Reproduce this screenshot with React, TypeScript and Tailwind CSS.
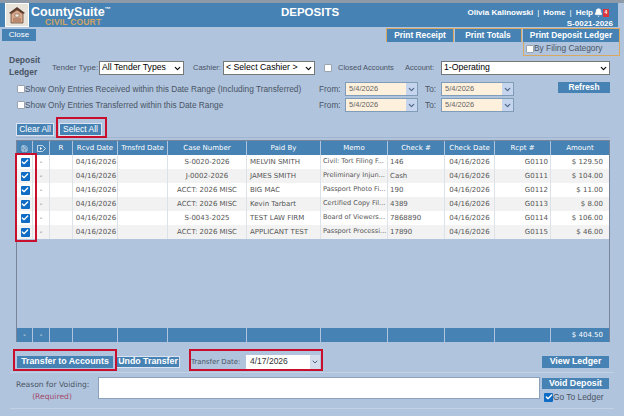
import { Bell, Check, ChevronDown, Save } from 'lucide-react'

const cols = 'grid grid-cols-[16px_17px_23px_45px_50px_79px_74px_67px_57px_50px_56px_58px]'

const rows = [
  { caseNo: 'S-0020-2026', paidBy: 'MELVIN SMITH', memo: 'Civil: Tort Filing F...', check: '146', rcpt: 'G0110', amount: '$ 129.50' },
  { caseNo: 'J-0002-2026', paidBy: 'JAMES SMITH', memo: 'Preliminary Injun...', check: 'Cash', rcpt: 'G0111', amount: '$ 104.00' },
  { caseNo: 'ACCT: 2026 MISC', paidBy: 'BIG MAC', memo: 'Passport Photo Fi...', check: '190', rcpt: 'G0112', amount: '$ 11.00' },
  { caseNo: 'ACCT: 2026 MISC', paidBy: 'Kevin Tarbart', memo: 'Certified Copy Fil...', check: '4389', rcpt: 'G0113', amount: '$ 8.00' },
  { caseNo: 'S-0043-2025', paidBy: 'TEST LAW FIRM', memo: 'Board of Viewers...', check: '7868890', rcpt: 'G0114', amount: '$ 106.00' },
  { caseNo: 'ACCT: 2026 MISC', paidBy: 'APPLICANT TEST', memo: 'Passport Processi...', check: '17890', rcpt: 'G0115', amount: '$ 46.00' },
]

const headers = ['Rcvd Date', 'Trnsfrd Date', 'Case Number', 'Paid By', 'Memo', 'Check #', 'Check Date', 'Rcpt #', 'Amount']

function Box({ className = '' }: { className?: string }) {
  return <span className={`inline-block w-[8px] h-[8px] bg-white border border-[#9aa4b2] rounded-[1px] shrink-0 ${className}`} />
}

function Tick({ className = '' }: { className?: string }) {
  return (
    <span className={`flex items-center justify-center w-[9px] h-[9px] bg-[#0f6cc4] rounded-[1px] shrink-0 ${className}`}>
      <Check size={8} strokeWidth={4} className="text-white" />
    </span>
  )
}

function DateBox({ value }: { value: string }) {
  return (
    <div className="flex items-center w-[73px] h-[14px] bg-[#fdf0dc] border border-[#7f9db9] pl-[3px]">
      <span className="flex-1 text-[7.5px] text-[#666]">{value}</span>
      <span className="flex items-center justify-center w-[11px] h-full bg-[#c5d5ee]">
        <ChevronDown size={9} strokeWidth={3} className="text-[#4d6185]" />
      </span>
    </div>
  )
}

function Select({ value, className = '' }: { value: string; className?: string }) {
  return (
    <div className={`flex items-center h-[14px] bg-white border border-[#767676] pl-[2px] pr-[1px] text-[8.7px] text-black ${className}`}>
      <span className="flex-1 whitespace-nowrap overflow-hidden">{value}</span>
      <ChevronDown size={9} strokeWidth={3} className="text-black" />
    </div>
  )
}

function Btn({ label, className = '' }: { label: string; className?: string }) {
  return (
    <div className={`flex items-center justify-center bg-[#4682b4] text-white font-bold whitespace-nowrap ${className}`}>
      {label}
    </div>
  )
}

function Logo() {
  return (
    <div className="w-[24px] h-[24px] bg-[#e8e4dc] border border-white flex items-center justify-center">
      <svg width="20" height="20" viewBox="0 0 20 20">
        <path d="M2 8 L10 2 L18 8 L16 9 L10 5 L4 9 Z" fill="#5b3a2a" />
        <path d="M4 9 L10 5 L16 9 V18 H4 Z" fill="#d9a98c" stroke="#6b4a3a" strokeWidth="0.8" />
        <rect x="8" y="9" width="4" height="3" fill="#f3efe6" stroke="#6b4a3a" strokeWidth="0.5" />
        <path d="M6 14 H14 M6 16 H14" stroke="#8a5a44" strokeWidth="0.8" />
      </svg>
    </div>
  )
}

export default function App() {
  return (
    <div className="relative w-[624px] h-[416px] overflow-hidden bg-[#b0c4de] font-['Liberation_Sans',Arial,sans-serif] text-[#4a5564]">
      <div className="h-[3px] bg-[#8f9aa8]" />

      {/* header */}
      <div className="flex h-[24px] w-[618px] bg-[#4682b4] text-white">
        <div className="pl-[5px]"><Logo /></div>
        <div className="ml-[2px] w-[160px] leading-none">
          <div className="flex items-start h-[12px] mt-[3px] text-[12.5px] font-bold whitespace-nowrap">
            CountySuite<span className="text-[6px] font-bold">™</span>
          </div>
          <div className="text-[8.5px] font-bold text-[#d0a566] ml-[14px] tracking-[0.2px]">CIVIL COURT</div>
        </div>
        <div className="w-[238px] mt-[4px] text-[11.5px] font-bold text-center leading-none">DEPOSITS</div>
        <div className="flex-1 pr-[5px] text-right leading-none font-bold text-[8px]">
          <div className="flex justify-end items-center gap-[4px] mt-[3px] h-[13px] pr-[4px]">
            <span className="whitespace-nowrap">Olivia Kalinowski</span>
            <span className="font-normal">|</span>
            <span>Home</span>
            <span className="font-normal">|</span>
            <span>Help</span>
            <span className="flex items-center -ml-[3px]">
              <Bell size={9} fill="white" />
              <span className="w-[6px] h-[8px] bg-[#d9363e] text-[5px] flex items-center justify-center">4</span>
            </span>
          </div>
          <div className="mt-[1px]">S-0021-2026</div>
        </div>
      </div>

      {/* close and print */}
      <div className="flex justify-between h-[29px] pt-[1px]">
        <Btn label="Close" className="w-[34px] h-[12px] ml-[2px] mt-[1px] font-normal text-[8px]" />
        <div className="flex flex-col w-[234px] mr-[4px]">
          <div className="flex h-[14px] gap-[1px] border-t border-[#d9a860] text-[8.4px]">
            <Btn label="Print Receipt" className="w-[68px] border-x border-[#d9a860]" />
            <Btn label="Print Totals" className="w-[67px] border-r border-[#d9a860]" />
            <Btn label="Print Deposit Ledger" className="flex-1 border-r border-[#d9a860]" />
          </div>
          <div className="flex items-center self-end w-[97px] h-[14px] pl-[2px] border-x border-b border-[#d9a860] text-[8.4px]">
            <Box />
            <span className="whitespace-nowrap">By Filing Category</span>
          </div>
        </div>
      </div>

      {/* filters */}
      <div className="flex h-[25px] text-[7.5px]">
        <div className="w-[43px] pl-[9px] -mt-[2px] text-[8.5px] font-bold leading-[12px]">Deposit<br />Ledger</div>
        <div className="flex items-center ml-[9px] h-[14px] mt-[5px] whitespace-nowrap">
          <span className="w-[47px] text-[8px]">Tender Type:</span>
          <Select value="All Tender Types" className="w-[85px]" />
          <span className="ml-[9px] w-[30px]">Cashier:</span>
          <Select value="< Select Cashier >" className="w-[92px] text-[8.2px]" />
          <Box className="ml-[9px]" />
          <span className="ml-[6px] w-[67px]">Closed Accounts</span>
          <span className="w-[36px]">Account:</span>
          <Select value="1-Operating" className="w-[169px]" />
        </div>
      </div>

      <div className="flex h-[16px] pl-[17px] items-center text-[8.3px] whitespace-nowrap">
        <Box />
        <span className="w-[294px]">Show Only Entries Received within this Date Range (Including Transferred)</span>
        <span className="w-[26px]">From:</span>
        <DateBox value="5/4/2026" />
        <span className="ml-[7px] w-[16px]">To:</span>
        <DateBox value="5/4/2026" />
        <Btn label="Refresh" className="ml-[44px] w-[52px] h-[11px] -mt-[4px] text-[8.4px]" />
      </div>
      <div className="flex h-[16px] pl-[17px] items-center text-[8.3px] whitespace-nowrap">
        <Box />
        <span className="w-[294px]">Show Only Entries Transferred within this Date Range</span>
        <span className="w-[26px]">From:</span>
        <DateBox value="5/4/2026" />
        <span className="ml-[7px] w-[16px]">To:</span>
        <DateBox value="5/4/2026" />
      </div>

      <div className="flex gap-[5px] ml-[16px] w-[594px] mt-[10px] h-[15px] mb-[2px] border-b border-[#a2b4cc] text-[8.5px]">
        <Btn label="Clear All" className="w-[38px] h-[13px] font-normal border border-[#dbe4f0]" />
        <Btn label="Select All" className="w-[43px] h-[13px] font-normal border border-[#dbe4f0]" />
      </div>

      {/* table */}
      <div className="flex flex-col w-[594px] h-[202px] ml-[16px] border-l border-r border-t border-[#77849a] font-['DejaVu_Sans',sans-serif] text-[7px]">
        <div className={`${cols} h-[14px] bg-[#4682b4] text-white`}>
          <div className="flex items-center justify-center border-r border-[#b0c4de]"><Save size={7} /></div>
          <div className="flex items-center justify-center border-r border-[#b0c4de]">
            <svg width="9" height="7" viewBox="0 0 9 7" fill="none" stroke="white" strokeWidth="0.7">
              <path d="M0.5 0.5 H5.5 L8.5 3.5 L5.5 6.5 H0.5 Z" />
              <path d="M3 2 L5 3.5 L3 5 Z" fill="white" stroke="none" />
            </svg>
          </div>
          <div className="flex items-center justify-center border-r border-[#b0c4de]">R</div>
          {headers.map(h => (
            <div key={h} className="flex items-center justify-center border-r border-[#b0c4de] whitespace-nowrap last:border-r-0">{h}</div>
          ))}
        </div>
        {rows.map((r, i) => (
          <div key={r.rcpt} className={`${cols} h-[14px] items-stretch text-[#555] ${i % 2 ? 'bg-[#f2f2f2]' : 'bg-white'}`}>
            <div className="flex items-center justify-center pl-[1px] border-r border-[#dde2e8]"><Tick /></div>
            <div className="flex items-center justify-center border-r border-[#dde2e8]">-</div>
            <div className="border-r border-[#dde2e8]" />
            <div className="flex items-center justify-center pl-[2px] border-r border-[#dde2e8]">04/16/2026</div>
            <div className="border-r border-[#dde2e8]" />
            <div className="flex items-center justify-center border-r border-[#dde2e8] whitespace-nowrap">{r.caseNo}</div>
            <div className="flex items-center pl-[3px] border-r border-[#dde2e8] whitespace-nowrap">{r.paidBy}</div>
            <div className="flex items-center pl-[2px] border-r border-[#dde2e8] whitespace-nowrap text-[6.6px]">{r.memo}</div>
            <div className="flex items-center pl-[2px] border-r border-[#dde2e8]">{r.check}</div>
            <div className="flex items-center justify-center border-r border-[#dde2e8]">04/16/2026</div>
            <div className="flex items-center justify-end pr-[2px] border-r border-[#dde2e8]">{r.rcpt}</div>
            <div className="flex items-center justify-end pr-[6px]">{r.amount}</div>
          </div>
        ))}
        <div className="flex-1" />
        <div className={`${cols} h-[14px] bg-[#4682b4] text-white`}>
          <div className="flex items-center justify-center border-r border-[#b0c4de]">-</div>
          <div className="flex items-center justify-center border-r border-[#b0c4de]">-</div>
          {[0, 1, 2, 3, 4, 5, 6, 7, 8].map(i => <div key={i} className="border-r border-[#b0c4de]" />)}
          <div className="flex items-center justify-end pr-[6px]">$ 404.50</div>
        </div>
      </div>

      {/* transfer */}
      <div className="flex items-center h-[15px] mt-[12px] pl-[17px] text-[8.8px]">
        <Btn label="Transfer to Accounts" className="w-[96px] h-[12px]" />
        <Btn label="Undo Transfer" className="ml-[3px] w-[64px] h-[12px] border border-[#dbe4f0]" />
        <span className="ml-[11px] w-[55px] mt-[2px] whitespace-nowrap font-['DejaVu_Sans',sans-serif] text-[7px]">Transfer Date:</span>
        <div className="flex items-center w-[74px] h-[14px] bg-white pl-[4px] text-[8.5px] text-[#333]">
          <span className="flex-1">4/17/2026</span>
          <span className="flex items-center justify-center w-[10px] h-full bg-[#d3dceb]">
            <ChevronDown size={8} strokeWidth={3} className="text-[#4d6185]" />
          </span>
        </div>
        <Btn label="View Ledger" className="ml-[222px] w-[67px] h-[12px]" />
      </div>

      <div className="h-px mx-[10px] mt-[3px] bg-[#c3d1e4]" />

      {/* void */}
      <div className="flex mt-[4px] h-[31px]">
        <div className="w-[98px] pl-[16px] pt-[2px] text-[7.6px] text-center leading-[12px] font-['DejaVu_Sans',sans-serif]">
          <div className="whitespace-nowrap w-[72px]">Reason for Voiding:</div>
          <div className="text-[#a34a6a] w-[72px]">(Required)</div>
        </div>
        <div className="w-[442px] h-[22px] bg-white border border-[#8aa0bd]" />
        <div className="ml-[2px] w-[67px] pt-[1px]">
          <Btn label="Void Deposit" className="h-[11px] text-[8.8px]" />
          <div className="flex items-center pl-[2px] mt-[2px] text-[8.4px] whitespace-nowrap"><Tick /><span>Go To Ledger</span></div>
        </div>
      </div>

      <div className="h-px mx-[10px] bg-[#c3d1e4]" />

      {/* red callouts */}
      <div className="absolute left-[56px] top-[117px] w-[51px] h-[21px] border-[2px] border-[#c8102e]" />
      <div className="absolute left-[15px] top-[153px] w-[22px] h-[89px] border-[2px] border-[#c8102e]" />
      <div className="absolute left-[13px] top-[349px] w-[104px] h-[22px] border-[2px] border-[#c8102e]" />
      <div className="absolute left-[189px] top-[349px] w-[134px] h-[22px] border-[2px] border-[#c8102e]" />
    </div>
  )
}
